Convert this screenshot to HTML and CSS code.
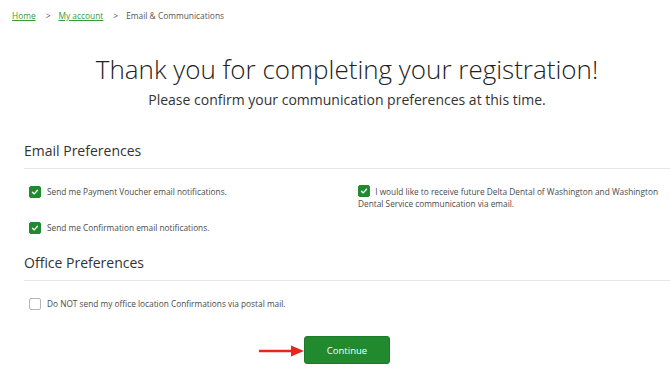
FILE: index.html
```html
<!DOCTYPE html>
<html>
<head>
<meta charset="utf-8">
<link rel="stylesheet" href="styles.css">
</head>
<body>
<nav class="crumbs">
  <a href="#">Home</a>
  <span class="sep">&gt;</span>
  <a href="#">My account</a>
  <span class="sep">&gt;</span>
  <span class="current">Email &amp; Communications</span>
</nav>

<header class="intro">
  <h1>Thank you for completing your registration!</h1>
  <p>Please confirm your communication preferences at this time.</p>
</header>

<section class="group">
  <h2>Email Preferences</h2>
  <div class="grid">
    <div class="col">
      <label class="opt"><span class="box on"><svg viewBox="0 0 12 12"><path d="M3 6.3 L5.1 8.3 L9 3.9" /></svg></span><span>Send me Payment Voucher email notifications.</span></label>
      <label class="opt"><span class="box on"><svg viewBox="0 0 12 12"><path d="M3 6.3 L5.1 8.3 L9 3.9" /></svg></span><span>Send me Confirmation email notifications.</span></label>
    </div>
    <div class="col">
      <p class="opt-wrap"><span class="box on inline"><svg viewBox="0 0 12 12"><path d="M3 6.3 L5.1 8.3 L9 3.9" /></svg></span> I would like to receive future Delta Dental of Washington and Washington Dental Service communication via email.</p>
    </div>
  </div>
</section>

<section class="group">
  <h2>Office Preferences</h2>
  <div class="grid single">
    <label class="opt"><span class="box"></span><span>Do NOT send my office location Confirmations via postal mail.</span></label>
  </div>
</section>

<div class="actions">
  <span class="arrow"><svg width="46" height="12" viewBox="0 0 46 12"><path d="M0 6 H34" stroke="#e8261c" stroke-width="2.4"/><path d="M32 0.5 L45 6 L32 11.5 Z" fill="#e8261c"/></svg></span>
  <button class="btn">Continue</button>
</div>
</body>
</html>
```

FILE: styles.css
```css
* { box-sizing: border-box; }
html { overflow: hidden; }
body {
  margin: 0;
  font-family: "Open Sans", "Liberation Sans", sans-serif;
  color: #444;
  background: #fff;
  width: 694px;
}
.crumbs {
  display: flex;
  align-items: center;
  padding: 9px 0 0 12px;
  font-size: 8.4px;
  height: 22px;
}
.crumbs a { color: #3a9a3a; text-decoration: underline; }
.crumbs .sep { margin: 0 8px 0 10px; color: #555; }
.crumbs .current { color: #555; }

.intro { text-align: center; }
.intro h1 {
  margin: 31px 0 0;
  font-weight: 300;
  font-size: 26px;
  color: #222;
  line-height: 32px;
}
.intro p {
  margin: 6px 0 0;
  font-size: 14px;
  color: #333;
  line-height: 18px;
}

.group { margin-left: 24px; }
.group h2 {
  margin: 0;
  font-weight: 400;
  font-size: 14px;
  line-height: 20px;
  color: #333;
  padding-bottom: 7px;
  border-bottom: 1px solid #e6e6e6;
}
section.group:nth-of-type(1) { margin-top: 32px; }
section.group:nth-of-type(2) { margin-top: 19px; }

.grid {
  display: grid;
  grid-template-columns: 329px 312px;
  padding: 16px 0 0 5px;
}
.grid.single { display: block; padding-top: 16px; }
.col { display: flex; flex-direction: column; gap: 23px; }
.opt {
  display: flex;
  align-items: center;
  gap: 6px;
  font-size: 8.3px;
  color: #4a4a4a;
  line-height: 13px;
}
.opt-wrap {
  margin: 0;
  font-size: 8.3px;
  line-height: 11.5px;
  color: #4a4a4a;
}
.box {
  width: 12px;
  height: 12px;
  border-radius: 2px;
  border: 1px solid #b5b5b5;
  background: #fff;
  flex: none;
  display: inline-flex;
  align-items: center;
  justify-content: center;
}
.box.on { background: #218a2f; border-color: #218a2f; }
.box svg { width: 12px; height: 12px; }
.box svg path { fill: none; stroke: #fff; stroke-width: 1.6; stroke-linecap: round; stroke-linejoin: round; }
.box.inline { vertical-align: -2px; margin-right: 3px; }

.actions {
  display: flex;
  justify-content: center;
  align-items: center;
  margin-top: 26px;
  position: relative;
}
.arrow { position: absolute; left: 259px; top: 9px; line-height: 0; }
.btn {
  width: 86px;
  height: 28px;
  background: #218a2f;
  color: #fff;
  border: 1px solid #1c7a29;
  border-radius: 3px;
  font-family: inherit;
  font-size: 9.5px;
}
```
